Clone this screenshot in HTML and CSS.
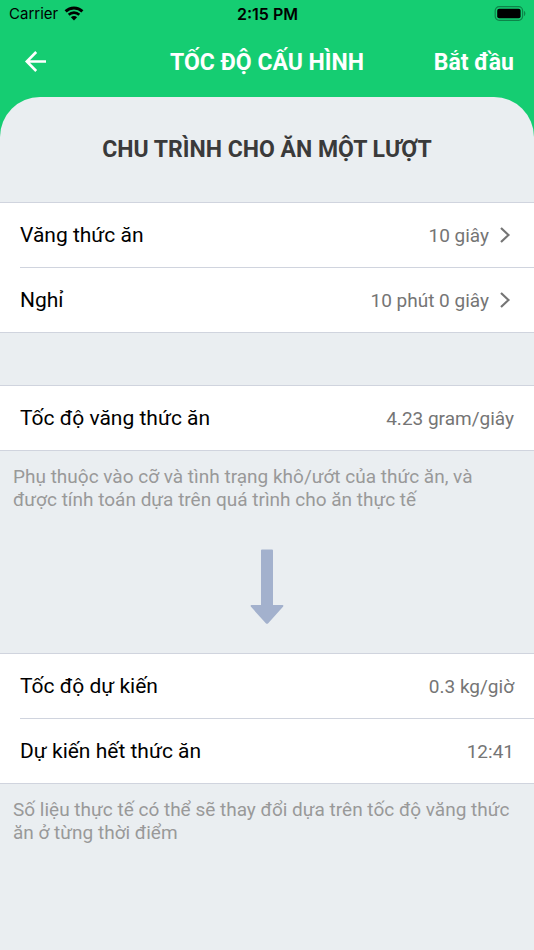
FILE: index.html
```html
<!DOCTYPE html>
<html lang="vi">
<head>
    <meta charset="utf-8">
    <meta name="viewport" content="width=device-width, initial-scale=1">
    <title>Tốc độ cấu hình</title>
    <link rel="stylesheet" href="styles.css">
</head>
<body>
    <div class="status-bar">
        <div class="carrier">
            <span>Carrier</span>
            <svg class="wifi" viewBox="0 0 20 15" width="20" height="15">
                <path d="M1.6 5.4a12 12 0 0 1 16.8 0" fill="none" stroke="#000" stroke-width="2.9"/>
                <path d="M4.7 8.8a7.6 7.6 0 0 1 10.6 0" fill="none" stroke="#000" stroke-width="2.6"/>
                <path d="M10 14.4 6.9 11.3a4.4 4.4 0 0 1 6.2 0z"/>
            </svg>
        </div>
        <span class="time">2:15 PM</span>
        <svg class="battery" viewBox="0 0 32 15" width="32" height="15">
            <rect x="1.2" y=".7" width="27.4" height="13.6" rx="4" fill="none" stroke="#0d8449" stroke-width="1.2"/>
            <rect x="3.2" y="2.7" width="23.4" height="9.6" rx="2"/>
            <path d="M30 5v5c1.8-.6 1.8-4.4 0-5z" fill="#0d8449"/>
        </svg>
    </div>
    <header class="nav-bar">
        <button class="back" type="button" aria-label="Quay lại">
            <svg viewBox="0 0 24 24" width="24" height="24">
                <path d="M22 11.5H3M12.2 2 2.800 11.5 12.2 21" fill="none" stroke="#fff" stroke-width="2.6"/>
            </svg>
        </button>
        <h1 class="nav-title">TỐC ĐỘ CẤU HÌNH</h1>
        <button class="start" type="button">Bắt đầu</button>
    </header>
    <main class="panel">
        <h2 class="panel-title">CHU TRÌNH CHO ĂN MỘT LƯỢT</h2>

        <div class="group">
            <button class="row" type="button">
                <span class="label">Văng thức ăn</span>
                <span class="value">10 giây</span>
                <svg class="chevron" viewBox="0 0 10 16" width="10" height="16">
                    <path d="M1 1l7.5 7L1 15" fill="none" stroke="#757575" stroke-width="2.2"/>
                </svg>
            </button>
            <button class="row" type="button">
                <span class="label">Nghỉ</span>
                <span class="value">10 phút 0 giây</span>
                <svg class="chevron" viewBox="0 0 10 16" width="10" height="16">
                    <path d="M1 1l7.5 7L1 15" fill="none" stroke="#757575" stroke-width="2.2"/>
                </svg>
            </button>
        </div>

        <div class="group spaced">
            <div class="row">
                <span class="label">Tốc độ văng thức ăn</span>
                <span class="value">4.23 gram/giây</span>
            </div>
        </div>
        <p class="note">Phụ thuộc vào cỡ và tình trạng khô/ướt của thức ăn, và được tính toán dựa trên quá trình cho ăn thực tế</p>

        <div class="arrow">
            <svg viewBox="0 0 34 76" width="34" height="76">
                <path d="M12 .5h10q1 0 1 1V56h9.5q1.5 .4.5 1.8L18.2 74.3q-1.2 1-2.4 0L1 57.8Q0 56.4 1.5 56H11V1.5q0-1 1-1z" fill="#a3b1cd"/>
            </svg>
        </div>

        <div class="group">
            <div class="row">
                <span class="label">Tốc độ dự kiến</span>
                <span class="value">0.3 kg/giờ</span>
            </div>
            <div class="row">
                <span class="label">Dự kiến hết thức ăn</span>
                <span class="value">12:41</span>
            </div>
        </div>
        <p class="note">Số liệu thực tế có thể sẽ thay đổi dựa trên tốc độ văng thức ăn ở từng thời điểm</p>
    </main>
</body>
</html>
```

FILE: styles.css
```css
* {
    box-sizing: border-box;
}
body {
    margin: 0;
    min-height: 100vh;
    display: flex;
    flex-direction: column;
    background-color: #15cd72;
    font-family: Roboto, "Noto Sans", sans-serif;
    color: #000;
}
button {
    margin: 0;
    padding: 0;
    border: none;
    background: none;
    font: inherit;
    color: inherit;
    cursor: pointer;
}
svg {
    display: block;
    flex: none;
}

/* Status bar */
.status-bar {
    display: grid;
    grid-template-columns: 1fr auto 1fr;
    align-items: center;
    height: 27px;
    padding: 0 8px 0 9px;
    font-family: Inter, sans-serif;
    font-size: 15px;
}
.carrier {
    display: flex;
    align-items: center;
    gap: 6px;
}
.time {
    font-size: 16px;
    font-weight: 600;
}
.battery {
    justify-self: end;
}

/* Header */
.nav-bar {
    display: grid;
    grid-template-columns: 1fr auto 1fr;
    align-items: center;
    height: 70px;
    padding: 0 20px;
    color: #fff;
}
.back {
    justify-self: start;
    padding: 0 4px;
}
.nav-title {
    margin: 0;
    font-size: 23px;
    font-weight: 700;
}
.start {
    justify-self: end;
    font-size: 23px;
    font-weight: 700;
}

/* Content */
.panel {
    flex: 1;
    background-color: #eaeef1;
    border-radius: 40px 40px 0 0;
}
.panel-title {
    margin: 0;
    padding: 38px 20px;
    font-size: 23px;
    line-height: 29px;
    font-weight: 700;
    text-align: center;
    color: #3a3a3a;
}
.group {
    background-color: #fff;
    border-top: 1px solid #d0d4de;
    border-bottom: 1px solid #d0d4de;
}
.spaced {
    margin-top: 52px;
}
.row {
    display: flex;
    align-items: center;
    width: 100%;
    height: 64px;
    padding: 0 20px;
    text-align: left;
}
.row + .row {
    width: auto;
    height: 65px;
    margin-left: 20px;
    padding-left: 0;
    border-top: 1px solid #d0d4de;
}
button.row + .row {
    width: calc(100% - 20px);
}
.label {
    flex: 1;
    font-size: 21px;
}
.value {
    font-size: 19px;
    color: #757575;
}
.chevron {
    margin: 0 4px 0 11px;
}
.note {
    margin: 0;
    padding: 14px 13px;
    font-size: 19px;
    line-height: 23px;
    color: #999;
}
.arrow {
    display: flex;
    justify-content: center;
    padding: 24px 0 28px;
}
```
